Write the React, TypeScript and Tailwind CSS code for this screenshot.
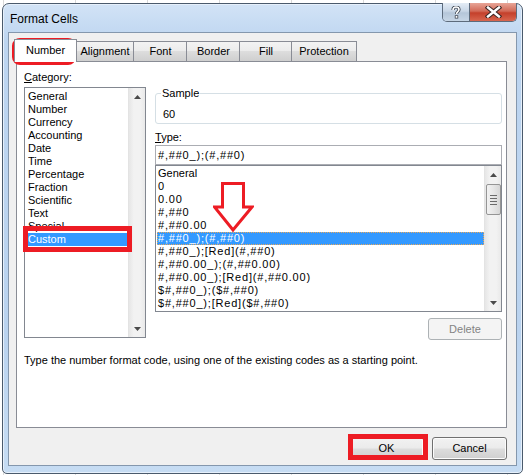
import React from "react";

const categories = [
  "General",
  "Number",
  "Currency",
  "Accounting",
  "Date",
  "Time",
  "Percentage",
  "Fraction",
  "Scientific",
  "Text",
  "Special",
  "Custom",
];

const types = [
  "General",
  "0",
  "0.00",
  "#,##0",
  "#,##0.00",
  "#,##0_);(#,##0)",
  "#,##0_);[Red](#,##0)",
  "#,##0.00_);(#,##0.00)",
  "#,##0.00_);[Red](#,##0.00)",
  "$#,##0_);($#,##0)",
  "$#,##0_);[Red]($#,##0)",
];

const tabs = [
  { label: "Alignment", w: "w-[60px]" },
  { label: "Font", w: "w-[55px]" },
  { label: "Border", w: "w-[55px]" },
  { label: "Fill", w: "w-[54px]" },
  { label: "Protection", w: "w-[66px]" },
];

function ArrowUp() {
  return (
    <svg width="7" height="4" viewBox="0 0 7 4">
      <polygon points="3.5,0 7,4 0,4" fill="#4a4a4a" />
    </svg>
  );
}

function ArrowDown() {
  return (
    <svg width="7" height="4" viewBox="0 0 7 4">
      <polygon points="0,0 7,0 3.5,4" fill="#4a4a4a" />
    </svg>
  );
}

function ScrollBar({ thumb }: { thumb?: boolean }) {
  return (
    <div className="w-[17px] h-full flex flex-col items-center bg-[linear-gradient(90deg,#e6e6e6,#f2f2f2_30%,#f2f2f2_70%,#e9e9e9)] border-l border-[#e3e3e3]">
      <div className="h-[17px] w-full flex items-center justify-center">
        <ArrowUp />
      </div>
      {thumb && (
        <div className="w-[15px] h-[31px] mt-[1px] rounded-[2px] border border-[#959595] bg-[linear-gradient(90deg,#f2f2f2,#e6e6e6_50%,#d6d6d6)] flex flex-col items-center justify-center gap-[2px]">
          <div className="w-[7px] h-[1px] bg-[#6a6a6a]" />
          <div className="w-[7px] h-[1px] bg-[#6a6a6a]" />
          <div className="w-[7px] h-[1px] bg-[#6a6a6a]" />
          <div className="w-[7px] h-[1px] bg-[#6a6a6a]" />
        </div>
      )}
      <div className="flex-1" />
      <div className="h-[17px] w-full flex items-center justify-center">
        <ArrowDown />
      </div>
    </div>
  );
}

function WinButton({ label }: { label: string }) {
  return (
    <button className="w-[75px] h-[23px] rounded-[3px] border border-[#707070] bg-[linear-gradient(#f2f2f2,#ebebeb_48%,#dddddd_52%,#cfcfcf)] text-black shadow-[inset_0_0_0_1px_#fcfcfc]">
      {label}
    </button>
  );
}

export default function App() {
  return (
    <div className="relative w-[525px] h-[475px] overflow-hidden bg-white bg-[repeating-linear-gradient(90deg,transparent_0,transparent_3px,#d9d9d9_3px,#d9d9d9_4px,transparent_4px,transparent_72px)] pt-[3px] pl-[2px] font-['Liberation_Sans',Arial,sans-serif] text-[11px] leading-[13px] text-black">
      {/* window */}
      <div className="w-[521px] h-[471px] rounded-t-[7px] rounded-b-[5px] border border-[#4a5a6c] bg-[linear-gradient(#d2e3f6,#bdd5f0_8%,#bad3ef_70%,#c6dcf3)] px-[5px] pb-[7px] flex flex-col shadow-[inset_0_0_0_1px_#e6f0fb]">
        {/* title bar */}
        <div className="h-[28px] flex items-start justify-between">
          <div className="pl-[2px] pt-[8px] text-[12px] leading-[14px]">Format Cells</div>
          <div className="-mt-[1px] flex h-[19px] rounded-b-[5px] border border-t-0 border-[#5d6b7c] overflow-hidden">
            <div className="w-[27px] h-full flex items-center justify-center bg-[linear-gradient(#e4ecf5,#c8d6e6_45%,#b5c6d9_55%,#c7d6e6)] border-r border-[#5d6b7c]">
              <svg width="10" height="13" viewBox="0 0 10 13">
                <path
                  d="M2 4 C2 1.5 3.5 1 5 1 C6.8 1 8 2 8 3.6 C8 5.6 5.5 5.8 5.5 8"
                  fill="none"
                  stroke="#3c4450"
                  strokeWidth="3.2"
                />
                <path
                  d="M2 4 C2 1.5 3.5 1 5 1 C6.8 1 8 2 8 3.6 C8 5.6 5.5 5.8 5.5 8"
                  fill="none"
                  stroke="#ffffff"
                  strokeWidth="1.6"
                />
                <rect x="3.8" y="9.3" width="3.4" height="3.2" fill="#3c4450" />
                <rect x="4.6" y="10" width="1.8" height="1.8" fill="#ffffff" />
              </svg>
            </div>
            <div className="w-[46px] h-full flex items-center justify-center bg-[linear-gradient(#e8a597,#d26a58_45%,#c4402b_55%,#d8664f)]">
              <svg width="17" height="12" viewBox="0 0 17 12">
                <path d="M3 1.5 L14 10.5 M14 1.5 L3 10.5" stroke="#3a2624" strokeWidth="4.4" strokeLinecap="square" />
                <path d="M3 1.5 L14 10.5 M14 1.5 L3 10.5" stroke="#ffffff" strokeWidth="2.4" strokeLinecap="square" />
              </svg>
            </div>
          </div>
        </div>

        {/* client area */}
        <div className="flex-1 bg-[#f0f0f0] border border-[#8497ad] pt-[6px] pl-[7px] pr-[9px] flex flex-col">
          {/* tabs */}
          <div className="h-[22px] flex items-end">
            <div className="relative z-10 -ml-[2px] w-[63px] h-[23px] -mb-[1px] bg-white border border-b-0 border-[#898c95] flex items-center justify-center pb-[1px]">
              Number
            </div>
            {tabs.map((t) => (
              <div
                key={t.label}
                className={`${t.w} -ml-[2px] first:ml-0 h-[20px] border border-b-0 border-[#898c95] bg-[linear-gradient(#f3f3f3,#ebebeb_50%,#dddddd_50%,#cfcfcf)] flex items-center justify-center`}
              >
                {t.label}
              </div>
            ))}
          </div>

          {/* panel */}
          <div className="h-[367px] bg-white border border-[#898c95] pl-[7px] pr-[4px] pt-[8px] flex flex-col">
            <div className="h-[14px] leading-[14px]">
              <span className="underline">C</span>ategory:
            </div>
            <div className="mt-[3px] flex gap-[9px]">
              {/* category list */}
              <div className="w-[122px] h-[251px] border border-[#828790] flex">
                <div className="flex-1 pt-[2px] pl-[2px]">
                  {categories.map((c) => (
                    <div
                      key={c}
                      className={`h-[13px] pl-[1px] ${c === "Custom" ? "bg-[#3399ff] text-white" : ""}`}
                    >
                      {c}
                    </div>
                  ))}
                </div>
                <ScrollBar />
              </div>

              {/* right column */}
              <div className="w-[347px] flex flex-col">
                <fieldset className="h-[37px] border border-[#d5dfe5] rounded-[3px] px-[6px]">
                  <legend className="px-[1px] ml-[-1px] leading-[12px]">Sample</legend>
                  <div className="mt-[9px] pl-[1px]">60</div>
                </fieldset>
                <div className="mt-[6px] h-[14px] leading-[14px]">
                  <span className="underline">T</span>ype:
                </div>
                <div className="mt-[1px] h-[20px] border border-[#abadb3] px-[2px] flex items-center tracking-[0.8px]">
                  #,##0_);(#,##0)
                </div>
                <div className="h-[147px] border border-[#828790] flex">
                  <div className="flex-1 pt-[1px] pl-[1px]">
                    {types.map((t, i) => (
                      <div
                        key={t}
                        className={`h-[13px] pl-[1px] whitespace-nowrap ${i === 0 ? "" : "tracking-[0.8px]"} ${
                          i === 5 ? "bg-[#3399ff] text-white outline-1 outline-dotted outline-[#e8a85a] -outline-offset-1" : ""
                        }`}
                      >
                        {t}
                      </div>
                    ))}
                  </div>
                  <ScrollBar thumb />
                </div>
                <div className="mt-[6px] self-end w-[74px] h-[22px] rounded-[3px] border border-[#adb2b5] bg-[#f4f4f4] text-[#838383] flex items-center justify-center">
                  Delete
                </div>
              </div>
            </div>
            <div className="mt-[13px] leading-[14px]">
              Type the number format code, using one of the existing codes as a starting point.
            </div>
          </div>

          {/* dialog buttons */}
          <div className="mt-[9px] flex justify-end gap-[8px]">
            <WinButton label="OK" />
            <WinButton label="Cancel" />
          </div>
        </div>
      </div>

      {/* red annotations */}
      <div className="absolute left-[12px] top-[38px] w-[64px] h-[27px] rounded-[8px] border-[4px] border-[#ed1c24]" />
      <div className="absolute left-[23px] top-[226px] w-[109px] h-[26px] border-[5px] border-[#ed1c24]" />
      <div className="absolute left-[348px] top-[434px] w-[80px] h-[26px] border-[5px] border-[#ed1c24]" />
      <svg className="absolute left-[213px] top-[182px]" width="41" height="50" viewBox="0 0 41 50">
        <path
          d="M9.5 1.5 L30.5 1.5 L30.5 25 L39 25 L20 48 L1.5 25 L9.5 25 Z"
          fill="none"
          stroke="#ed1c24"
          strokeWidth="3"
        />
      </svg>
    </div>
  );
}
